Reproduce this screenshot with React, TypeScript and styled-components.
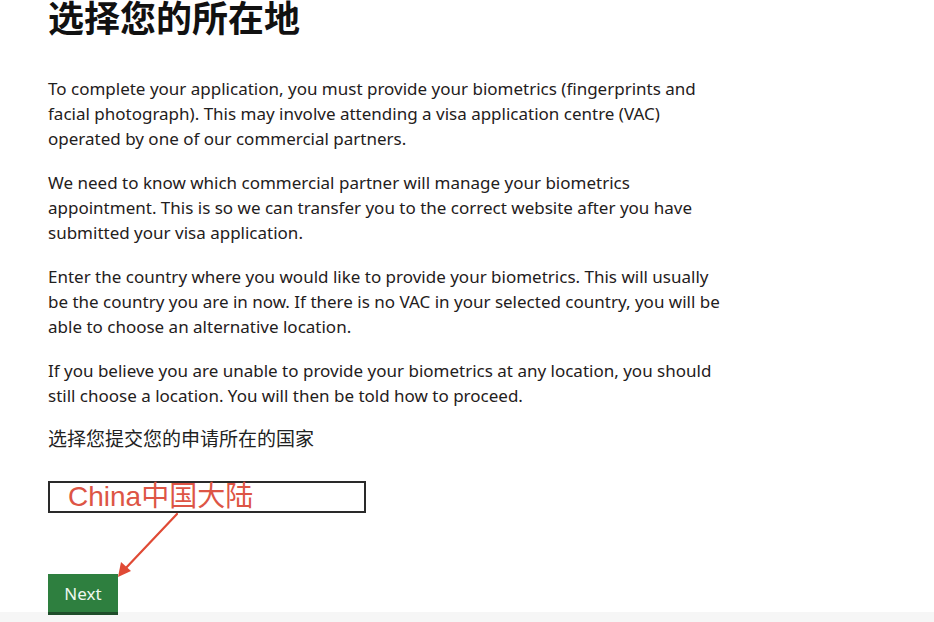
import React, { FC } from 'react';
import styled, { createGlobalStyle } from 'styled-components';

const GlobalStyle = createGlobalStyle`
    html, body {
        margin: 0;
        padding: 0;
        background: #ffffff;
    }
    body {
        font-family: 'Noto Sans', 'Noto Sans CJK SC', sans-serif;
        color: #1f2020;
    }
`;

const Page = styled.main`
    position: relative;
    width: 934px;
    height: 622px;
    overflow: hidden;
    padding: 0 0 0 48px;
    box-sizing: border-box;
    background: linear-gradient(to bottom, #ffffff 0, #ffffff 612px, #f6f6f6 612px);
`;

const Heading = styled.h1`
    margin: 0;
    font-family: 'Liberation Sans', 'Noto Sans CJK SC', sans-serif;
    font-size: 36px;
    line-height: 40px;
    font-weight: 700;
    color: #111;
`;

const Body = styled.div`
    max-width: 682px;
    margin-top: 36px;
    display: flex;
    flex-direction: column;
    gap: 19px;
`;

const Para = styled.p`
    margin: 0;
    font-size: 17px;
    line-height: 25px;
`;

const Label = styled.label`
    display: block;
    margin-top: 17px;
    font-family: 'Noto Sans CJK SC', sans-serif;
    font-size: 19px;
    line-height: 26px;
    color: #222;
`;

const Field = styled.div`
    width: 318px;
    height: 32px;
    margin-top: 30px;
    border: 2px solid #2a2a2a;
    box-sizing: border-box;
    display: flex;
    align-items: center;
    padding-left: 18px;
`;

const Scribble = styled.span`
    font-family: 'Liberation Sans', 'Noto Sans CJK SC', sans-serif;
    font-size: 28px;
    line-height: 28px;
    color: #dd5545;
    white-space: nowrap;
`;

const NextButton = styled.button`
    display: block;
    margin-top: 61px;
    width: 70px;
    height: 38px;
    border: none;
    border-radius: 0;
    background: #2e7f3f;
    box-shadow: 0 3px 0 #1f4d2a;
    color: #eef8f0;
    font-family: 'Noto Sans', sans-serif;
    font-size: 17px;
    padding: 0;
    cursor: pointer;
`;

const Arrow = styled.svg`
    position: absolute;
    left: 0;
    top: 0;
    pointer-events: none;
`;

const PARAGRAPHS = [
    'To complete your application, you must provide your biometrics (fingerprints and facial photograph). This may involve attending a visa application centre (VAC) operated by one of our commercial partners.',
    'We need to know which commercial partner will manage your biometrics appointment. This is so we can transfer you to the correct website after you have submitted your visa application.',
    'Enter the country where you would like to provide your biometrics. This will usually be the country you are in now. If there is no VAC in your selected country, you will be able to choose an alternative location.',
    'If you believe you are unable to provide your biometrics at any location, you should still choose a location. You will then be told how to proceed.',
];

const App: FC = () => {
    return (
        <>
            <GlobalStyle />
            <Page>
                <Heading>选择您的所在地</Heading>
                <Body>
                    {PARAGRAPHS.map((text) => (
                        <Para key={text.slice(0, 12)}>{text}</Para>
                    ))}
                </Body>
                <Label>选择您提交您的申请所在的国家</Label>
                <Field>
                    <Scribble>China中国大陆</Scribble>
                </Field>
                <NextButton type="button">Next</NextButton>
                <Arrow width={934} height={622} viewBox="0 0 934 622">
                    <line x1={177} y1={514} x2={124} y2={570} stroke="#e04a35" strokeWidth={2.2} strokeLinecap="round" />
                    <path d="M118 577 L121 562 L131 571 Z" fill="#e04a35" />
                </Arrow>
            </Page>
        </>
    );
};

export default App;
